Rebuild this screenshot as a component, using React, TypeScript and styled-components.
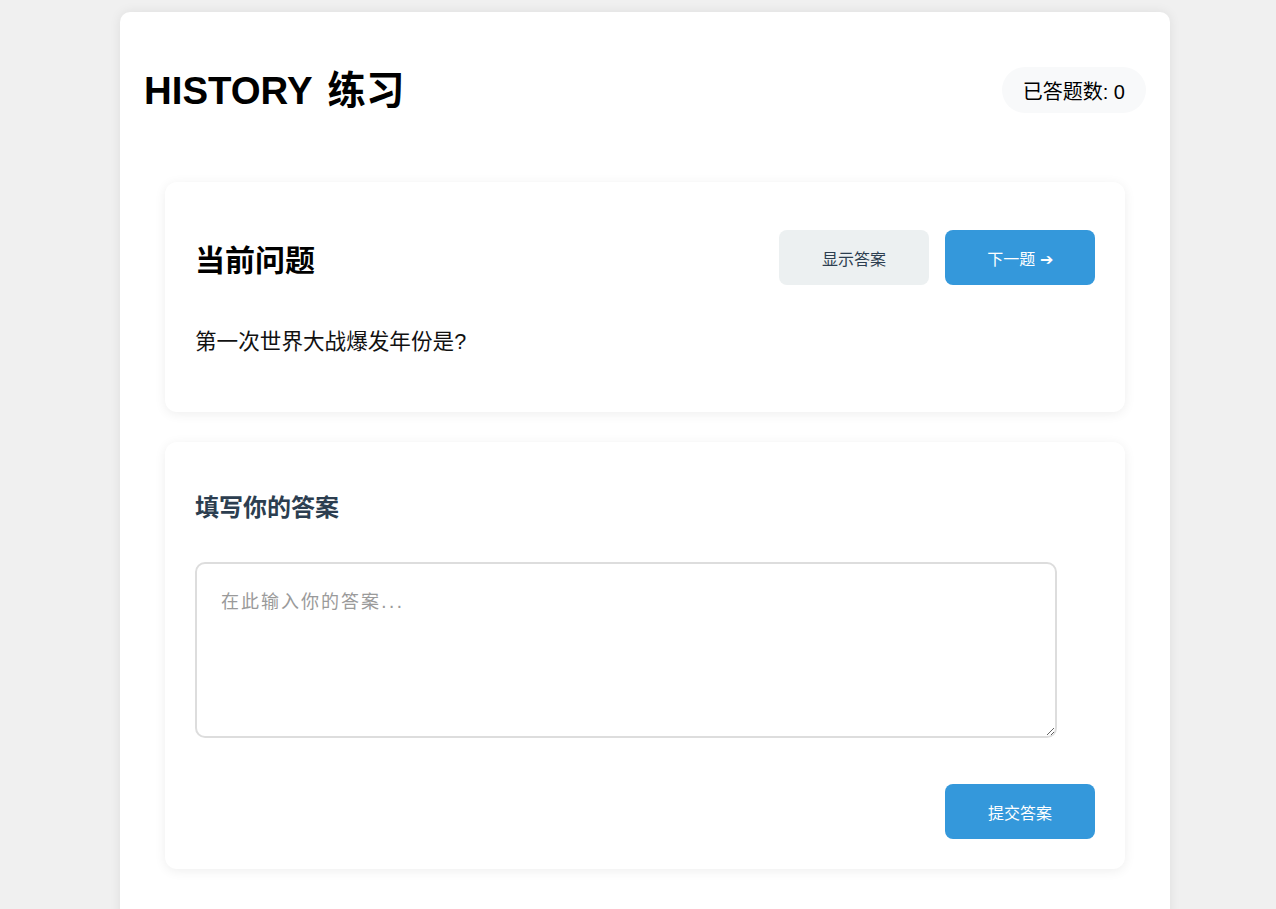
import React from "react";
import styled, { createGlobalStyle } from "styled-components";

const GlobalStyle = createGlobalStyle`
  html, body {
    margin: 0;
    padding: 0;
    background: #f0f0f0;
    font-family: "Liberation Sans", Arial, "Noto Sans CJK SC", sans-serif;
  }
  * { box-sizing: border-box; }
`;

const Page = styled.div`
  padding: 12px 106px 0 120px;
`;

const Container = styled.main`
  width: 1050px;
  background: #ffffff;
  border-radius: 10px;
  box-shadow: 0 0 12px rgba(0, 0, 0, 0.08);
  padding: 24px 24px 60px;
`;

const Header = styled.header`
  display: flex;
  align-items: center;
  justify-content: space-between;
  margin-top: 31px;
  height: 46px;
`;

const Title = styled.h1`
  margin: 0;
  font-size: 38.4px;
  font-weight: 700;
  color: #000;
  line-height: 1.15;
  word-spacing: 5px;
  transform: translateY(1px);
`;

const Counter = styled.div`
  background: #f8f9fa;
  border-radius: 23px;
  padding: 0 21px;
  height: 46px;
  display: flex;
  align-items: center;
  font-size: 20px;
  color: #000;
`;

const Cards = styled.div`
  max-width: 960px;
  margin: 69px auto 0;
  display: flex;
  flex-direction: column;
  gap: 30px;
`;

const Card = styled.section<{ $top: number; $bottom: number }>`
  background: #fff;
  border-radius: 12px;
  box-shadow: 0 2px 12px rgba(0, 0, 0, 0.07);
  padding: ${(p) => p.$top}px 30px ${(p) => p.$bottom}px;
`;

const CardHeader = styled.div`
  display: flex;
  align-items: center;
  justify-content: space-between;
  height: 55px;
`;

const CardTitle = styled.h2`
  margin: 0;
  font-size: 30px;
  font-weight: 700;
  color: #000;
`;

const Actions = styled.div`
  display: flex;
  gap: 16px;
`;

const Button = styled.button<{ $variant: "primary" | "secondary" }>`
  width: 150px;
  height: 55px;
  border: none;
  border-radius: 8px;
  font-family: inherit;
  font-size: 16px;
  cursor: pointer;
  background: ${(p) => (p.$variant === "primary" ? "#3498db" : "#ecf0f1")};
  color: ${(p) => (p.$variant === "primary" ? "#ffffff" : "#2c3e50")};
`;

const Question = styled.p`
  margin: 41px 0 0;
  font-size: 21.6px;
  line-height: 32px;
  color: #111;
`;

const AnswerTitle = styled.h3`
  margin: 0;
  font-size: 24px;
  line-height: 28px;
  font-weight: 700;
  color: #2c3e50;
`;

const AnswerBox = styled.textarea`
  display: block;
  margin-top: 40px;
  width: 862px;
  height: 176px;
  border: 2px solid #ddd;
  border-radius: 10px;
  padding: 23px 24px;
  font-family: "DejaVu Sans", "Noto Sans CJK SC", sans-serif;
  font-size: 18px;
  letter-spacing: 2px;
  color: #333;
  outline: none;
  &::placeholder {
    color: #9a9a9a;
  }
`;

const SubmitRow = styled.div`
  display: flex;
  justify-content: flex-end;
  margin-top: 46px;
`;

export default function App() {
  return (
    <>
      <GlobalStyle />
      <Page>
        <Container>
          <Header>
            <Title>HISTORY 练习</Title>
            <Counter>已答题数: 0</Counter>
          </Header>
          <Cards>
            <Card $top={48} $bottom={54}>
              <CardHeader>
                <CardTitle>当前问题</CardTitle>
                <Actions>
                  <Button $variant="secondary">显示答案</Button>
                  <Button $variant="primary">下一题 ➔</Button>
                </Actions>
              </CardHeader>
              <Question>第一次世界大战爆发年份是?</Question>
            </Card>
            <Card $top={52} $bottom={30}>
              <AnswerTitle>填写你的答案</AnswerTitle>
              <AnswerBox placeholder="在此输入你的答案..." />
              <SubmitRow>
                <Button $variant="primary">提交答案</Button>
              </SubmitRow>
            </Card>
          </Cards>
        </Container>
      </Page>
    </>
  );
}
